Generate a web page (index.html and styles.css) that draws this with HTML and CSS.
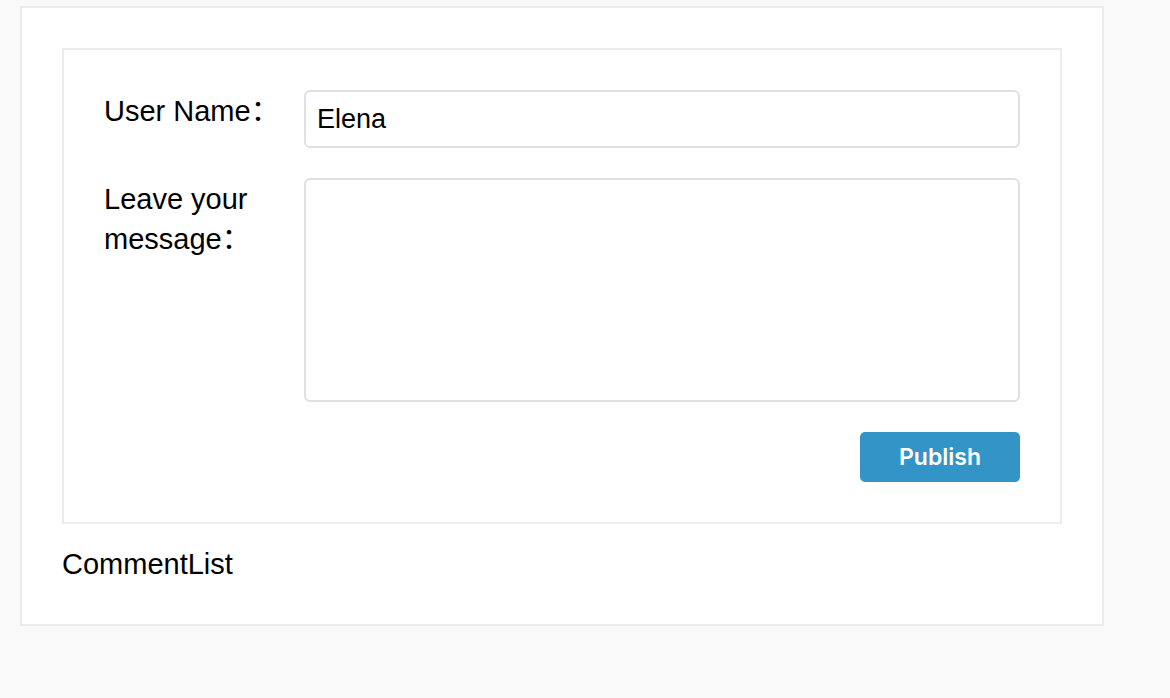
FILE: index.html
```html
<!DOCTYPE html>
<html lang="en">
<head>
<meta charset="utf-8">
<title>Comment</title>
<link rel="stylesheet" href="styles.css">
</head>
<body>
<div class="app">
  <form class="comment-form">
    <div class="form-row">
      <label class="form-label" for="username">User Name：</label>
      <input class="form-input" id="username" type="text" value="Elena">
    </div>
    <div class="form-row">
      <label class="form-label" for="message">Leave your message：</label>
      <textarea class="form-textarea" id="message"></textarea>
    </div>
    <div class="form-actions">
      <button class="publish-btn" type="button">Publish</button>
    </div>
  </form>
  <div class="comment-list">CommentList</div>
</div>
</body>
</html>
```

FILE: styles.css
```css
html, body {
  margin: 0;
  background: #f9f9f9;
}

body {
  padding: 6px 0 0 20px;
  font-family: "Liberation Sans", Arial, "Noto Sans CJK SC", sans-serif;
  color: #000;
}

.app {
  width: 1000px;
  padding: 40px;
  background: #fff;
  border: 2px solid #ececec;
}

.comment-form {
  display: flex;
  flex-direction: column;
  gap: 30px;
  padding: 40px;
  border: 2px solid #ececec;
}

.form-row {
  display: flex;
  align-items: flex-start;
}

.form-label {
  width: 200px;
  flex: none;
  font-size: 29px;
  line-height: 40px;
  padding-top: 1px;
}

.form-input,
.form-textarea {
  flex: 1;
  box-sizing: border-box;
  border: 2px solid #e0e0e0;
  border-radius: 6px;
  font-family: "Liberation Sans", Arial, sans-serif;
  font-size: 27px;
  color: #000;
  outline: none;
  margin: 0;
}

.form-input {
  height: 58px;
  padding: 0 11px;
}

.form-textarea {
  height: 224px;
  padding: 8px 11px;
  resize: none;
  display: block;
}

.form-actions {
  display: flex;
  justify-content: flex-end;
}

.publish-btn {
  width: 160px;
  height: 50px;
  border: none;
  border-radius: 5px;
  background: #3394c8;
  color: #fff;
  font-family: Inter, "Noto Sans", sans-serif;
  font-weight: 600;
  font-size: 23px;
  padding: 0;
}

.comment-list {
  margin-top: 20px;
  font-size: 29px;
  line-height: 40px;
}
```
